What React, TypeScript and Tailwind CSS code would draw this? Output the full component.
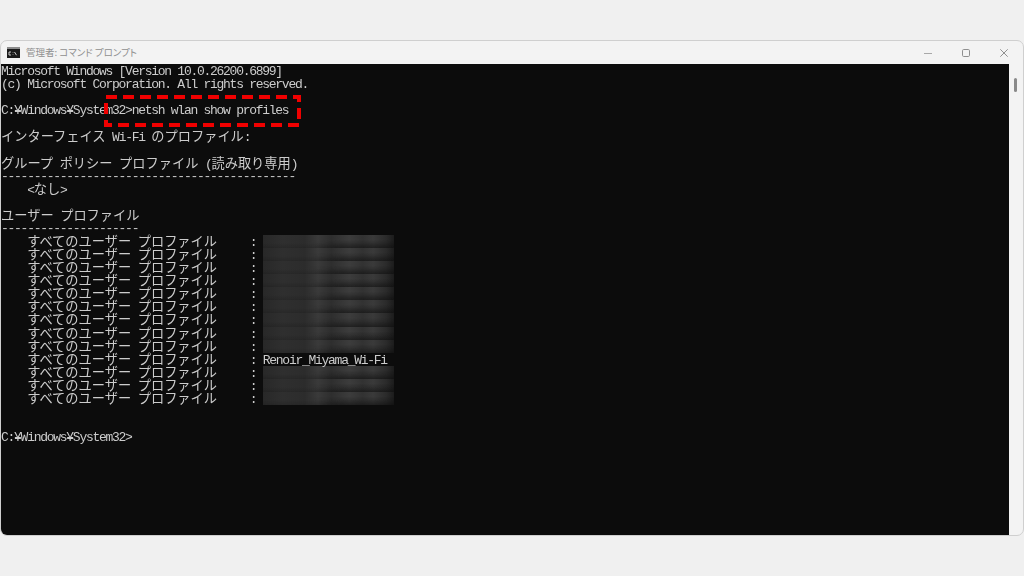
import React from "react";

function Run({ text }: { text: string }) {
  const parts = text.match(/[\x00-\x7f¥]+|[^\x00-\x7f¥]+/g) ?? [];
  return (
    <>
      {parts.map((p, i) =>
        /^[\x00-\x7f¥]/.test(p) ? (
          <span key={i} className="font-['Liberation_Mono',monospace] text-[13px] leading-[13px] tracking-[-1.27px]">
            {p}
          </span>
        ) : (
          <span key={i} className="font-['Noto_Sans_CJK_JP',sans-serif] text-[13.22px] leading-[12px] font-normal">
            {p}
          </span>
        )
      )}
    </>
  );
}

function Line({ text = "" }: { text?: string }) {
  return (
    <div className="relative z-10 flex h-[13.08px] items-baseline whitespace-pre leading-[13px]">
      <Run text={text} />
    </div>
  );
}

const profilePrefix = "    すべてのユーザー プロファイル     : ";

function Redacted() {
  return (
    <div className="flex h-[13.08px] items-baseline whitespace-pre leading-[13px]">
      <Run text={profilePrefix} />
      <span className="h-[13.08px] w-[131px] self-start bg-[linear-gradient(180deg,rgba(12,12,12,0)_60%,rgba(12,12,12,0.2)_100%),linear-gradient(90deg,#282828_0%,#2f2f2f_15%,#2c2c2c_32%,#3a3a3a_42%,#2e2e2e_52%,#3c3c3c_66%,#323232_76%,#3a3a3a_84%,#2b2b2b_94%,#1c1c1c_100%)]">
        <span className="block h-full bg-[linear-gradient(180deg,rgba(12,12,12,0)_35%,rgba(12,12,12,0.45)_100%)] [mask-image:linear-gradient(90deg,transparent_35%,black_60%)]" />
      </span>
    </div>
  );
}

export default function App() {
  return (
    <div className="flex h-[576px] w-[1024px] flex-col bg-[#f0f0f0] pt-[40px]">
      <div className="flex h-[496px] flex-col overflow-hidden rounded-[7px] border border-[#cfcfcf] bg-[#f3f3f3]">
        <div className="flex h-[23px] shrink-0 items-center pl-[6px]">
          <svg width="13" height="11" viewBox="0 0 13 11" className="shrink-0">
            <rect width="13" height="11" fill="#1a1a1a" />
            <rect width="13" height="2" fill="#8c8c8c" />
            <path d="M2 5h2M2 5v3h2M6 5.5v.5M6 7.5v.5M7.5 5l2 3.2" stroke="#dddddd" strokeWidth="0.9" fill="none" />
          </svg>
          <span className="ml-[6px] font-['Noto_Sans_CJK_JP',sans-serif] text-[9.5px] text-[#8f8f8f] [font-feature-settings:'palt']">管理者: コマンド プロンプト</span>
          <div className="ml-auto flex items-center pr-[15px] text-[#8a8a8a]">
            <svg width="8" height="8" viewBox="0 0 8 8" className="mr-[30px]">
              <path d="M0 4.5h8" stroke="#a8a8a8" strokeWidth="1" />
            </svg>
            <svg width="8" height="8" viewBox="0 0 8 8" className="mr-[30px]">
              <rect x="0.5" y="0.5" width="7" height="7" rx="1.2" fill="none" stroke="#8f8f8f" strokeWidth="1" />
            </svg>
            <svg width="8" height="8" viewBox="0 0 8 8">
              <path d="M0.3 0.3l7.4 7.4M7.7 0.3l-7.4 7.4" stroke="#8f8f8f" strokeWidth="1" />
            </svg>
          </div>
        </div>
        <div className="flex min-h-0 flex-1">
          <div className="relative flex-1 bg-[#0c0c0c] pt-[1px] text-[#cccccc]">
            <div className="blur-[0.35px]">
              <Line text="Microsoft Windows [Version 10.0.26200.6899]" />
              <Line text="(c) Microsoft Corporation. All rights reserved." />
              <Line />
              <Line text="C:¥Windows¥System32>netsh wlan show profiles" />
              <Line />
              <Line text="インターフェイス Wi-Fi のプロファイル:" />
              <Line />
              <Line text="グループ ポリシー プロファイル (読み取り専用)" />
              <Line text="---------------------------------------------" />
              <Line text="    <なし>" />
              <Line />
              <Line text="ユーザー プロファイル" />
              <Line text="---------------------" />
              {Array.from({ length: 9 }).map((_, i) => (
                <Redacted key={i} />
              ))}
              <Line text={profilePrefix + "Renoir_Miyama_Wi-Fi"} />
              {Array.from({ length: 3 }).map((_, i) => (
                <Redacted key={i} />
              ))}
              <Line />
              <Line />
              <Line text="C:¥Windows¥System32>" />
            </div>
            <svg width="200" height="32" viewBox="0 0 200 32" className="absolute left-[103px] top-[31px] z-20">
              <rect x="2" y="2" width="193" height="28" fill="none" stroke="#f00000" strokeWidth="4" strokeDasharray="11 6" />
            </svg>
          </div>
          <div className="w-[14px] shrink-0 pl-[5px] pt-[14px]">
            <div className="h-[14px] w-[3px] rounded-full bg-[#8a8a8a]" />
          </div>
        </div>
      </div>
    </div>
  );
}
